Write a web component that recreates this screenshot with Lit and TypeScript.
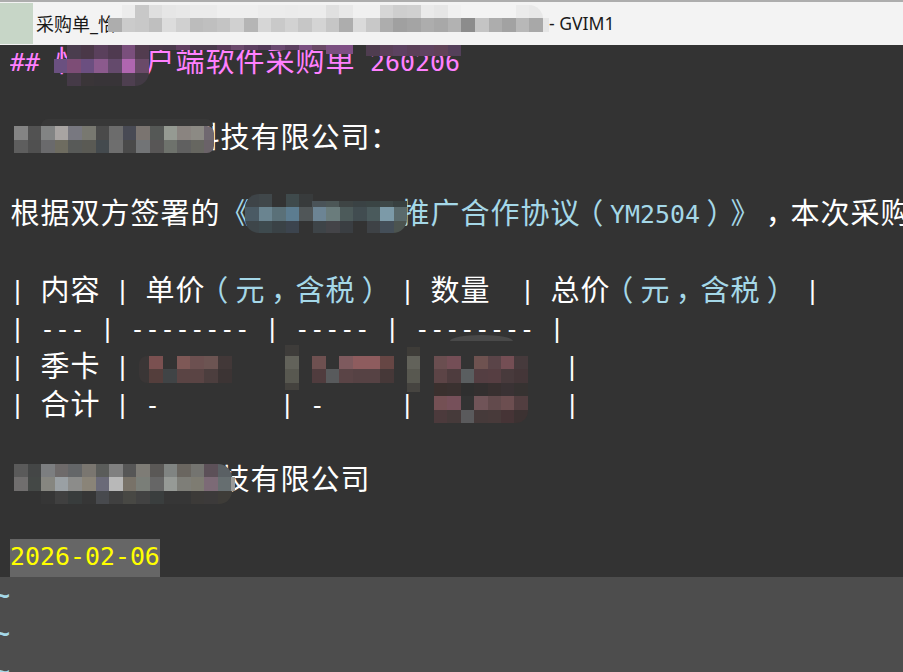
import { LitElement, html, css } from "lit";
import { customElement } from "lit/decorators.js";
import { styleMap } from "lit/directives/style-map.js";

type Seg = [string, string?];
interface Mosaic { x: number; y: number; cw: number; rh: number[]; rows: (string | null)[][]; r?: string; }

const _ = null;

const MOSAICS: Mosaic[] = [
  // title bar band
  { x: 108, y: 5, cw: 13.6, rh: [13, 14], r: "14px 14px 0 0", rows: [
    [_, "#ececec", "#c8c8c8", "#dfdfdf", "#e6e6e6", "#e8e8e8", "#ebebeb", "#ebebeb", "#efefef", "#efefef", "#efefef", "#ececec", "#ececec", "#ebebeb", "#ececec", "#ececec", "#e0e0e0", "#e8e8e8", "#f0f0f0", "#f0f0f0", "#d6d6d6", "#cecece", "#d0d0d0", "#eaeaea", "#e6e6e6", "#f0f0f0", _, _, _, _, "#ebebeb", "#e8e8e8"],
    ["#adadad", "#cbcbcb", "#c8c8c8", "#bfbfbf", "#dcdcdc", "#d0d0d0", "#bcbcbc", "#bfbfbf", "#c4c4c4", "#d0d0d0", "#b5b5b5", "#d6d6d6", "#c9c9c9", "#d2d2d2", "#c6c6c6", "#d4d4d4", "#c6c6c6", "#adadad", "#dadada", "#c8c8c8", "#adadad", "#a0a0a0", "#a4a4a4", "#adadad", "#a8a8a8", "#b2b2b2", "#8c8c8c", "#c4c4c4", "#adadad", "#a2a2a2", "#b8b8b8", "#a8a8a8"],
  ] },
  { x: 543, y: 18, cw: 6, rh: [14], rows: [["#e6e6e6"]] },
  // heading: strips just under the title bar
  { x: 149, y: 45, cw: 13.6, rh: [5], rows: [
    ["#4c3a4c", "#4a3a4c", "#603f60", "#4a3a4c", "#4a3a4c", "#5a3c5a", "#6b4a6c", "#5c4060", "#533a58", "#6a4a70", "#5c4060", "#7a5080", "#6a4a66"],
  ] },
  { x: 326, y: 45, cw: 13.6, rh: [9], rows: [["#7a5080", "#7f4f85"]] },
  { x: 366, y: 45, cw: 13.6, rh: [11], rows: [["#4f3d50", "#5a4058", "#5c4260", "#5a4058", "#5f4460", "#604458", "#54405a"]] },
  // heading: main blob
  { x: 53.6, y: 45, cw: 13.6, rh: [14, 14, 13], r: "0 0 14px 14px", rows: [
    [_, "#4a3d4e", "#4a3848", "#5a405c", "#4f3a50", "#7a4f7c", "#523c4f"],
    ["#6a5080", "#7d4d76", "#6b4f80", "#8b5a8d", "#644a6c", "#b066b0", "#6a4a68"],
    [_, "#453a47", "#3a3538", "#383438", "#383438", "#4e3f50", "#423a44"],
  ] },
  // line 3
  { x: 41, y: 119, cw: 172, rh: [7], r: "8px 8px 0 0", rows: [["#383838"]] },
  { x: 14, y: 126, cw: 13.6, rh: [14, 13], rows: [
    ["#848484", "#525252", "#828484", "#a8a4a2", "#787880", "#787870", "#4a4a4a", "#6c6c6c", "#484a54", "#7a7470", "#555856", "#959a92", "#8a8480", "#8c8a84"],
    ["#5e5e5e", "#505050", "#6a6a6c", "#6e6c60", "#585a58", "#5a5a54", "#444a4e", "#6e6e6e", "#4a4a4a", "#727476", "#585656", "#6e726c", "#606060", "#666660"],
  ] },
  { x: 204, y: 126, cw: 10, rh: [14, 13], r: "0 7px 7px 0", rows: [["#706870"], ["#6a6268"]] },
  // line 5
  { x: 245, y: 194, cw: 13.5, rh: [13, 14, 12], r: "14px 14px 14px 14px", rows: [
    ["#3e4448", "#40474a", _, "#3f4a4c", "#383b3c", _, _, _, _, _, _, _],
    ["#4a5a64", "#6a8490", "#5a7078", "#5c7c90", "#505658", "#6c8494", "#6a7c7c", "#4c5a5a", "#414c50", "#4a5a5c", "#7c9aa8", "#5a6a6c"],
    ["#3e464a", "#3e4a4e", "#3a4246", "#3c444e", _, "#3e4448", "#444448", "#3a3e42", _, "#3e4246", "#444e58", "#4c5450"],
  ] },
  { x: 312, y: 201, cw: 13.5, rh: [6], rows: [
    ["#4a5358", "#4c5656", "#3e4444", "#3a4244", "#3a4444", "#3e4848", "#384040"],
  ] },
  // line 9, amount cells
  { x: 139, y: 356, cw: 10, rh: [27], r: "8px 0 0 8px", rows: [["#3a3636"]] },
  { x: 149, y: 356, cw: 13.8, rh: [13, 14], rows: [
    ["#7a5050", _, "#7e5856", "#6c5050", "#6c5452", "#423838"],
    ["#543e3c", "#404446", "#5a4444", "#5a4444", "#4c3e3e", "#3c3434"],
  ] },
  { x: 285, y: 345, cw: 14, rh: [11, 13, 14, 7], rows: [["#3e3c3a"], ["#62625a"], ["#585850"], ["#44423e"]] },
  { x: 312, y: 356, cw: 13.6, rh: [13, 14], rows: [
    ["#6e5050", _, "#7e5a5e", "#8e5c5e", "#8e5c5e", "#664644"],
    ["#503c3e", "#585a5c", "#5a4446", "#564244", "#564244", "#463838"],
  ] },
  { x: 407, y: 347, cw: 13, rh: [9, 13, 14, 9], rows: [["#3e3c38"], ["#62625a"], ["#585850"], ["#464440"]] },
  { x: 434, y: 356, cw: 13.4, rh: [13, 14, 13, 14, 13], r: "0 0 12px 0", rows: [
    ["#6a4e50", "#744e56", _, "#6e5250", "#5a4448", "#744e54", "#463a3c"],
    ["#5c4446", "#4e3c3e", "#5a5e60", "#543e42", "#563e42", "#483a3c", "#443638"],
    ["#3a302e", "#3a3130", "#2f2f2f", "#332f2f", "#383030", "#3a3234", "#363231"],
    ["#745054", "#76505a", _, "#705458", "#624a4c", "#6c4e50", "#523e40"],
    ["#4c3a3c", "#463a3a", "#5a5a5c", "#463a3a", "#483a3a", "#463436", "#3c3232"],
  ] },
  // line 12
  { x: 14, y: 464, cw: 13.6, rh: [13, 14], r: "0 14px 0 0", rows: [
    ["#5a5a5a", "#444646", "#7c7e80", "#6e6a6a", "#646668", "#7a7670", "#5a5c5a", "#808080", "#565656", "#7e7c76", "#5a5856", "#808482", "#6a6660", "#747470", "#5c5058", "#5a6064"],
    ["#706e6e", "#444846", "#868680", "#9aa0a4", "#8c8c8a", "#8a8478", "#6a6a78", "#b8b8b8", "#787268", "#7a7e78", "#666666", "#969a96", "#7e7e78", "#7e7c72", "#7c6a76", "#666e70"],
  ] },
  { x: 231, y: 477, cw: 4, rh: [14], rows: [["#9a9a98"]] },
  { x: 27.6, y: 491, cw: 13.6, rh: [13], r: "0 0 14px 0", rows: [
    [_, "#363636", "#404040", "#383c3c", "#363636", "#484a4e", "#404040", "#484844", "#424242", "#3a3e3e", "#363636", "#363636", "#3c3a38", "#3c3a3a", "#3e3c38"],
  ] },
];

const SP = "\u3000";

const LINES: Seg[][] = [
  [[`## 怡${SP}${SP}户端软件采购单 260206`, "h"]],
  [],
  [[`${SP}${SP}${SP}${SP}${SP}${SP}科技有限公司：`]],
  [],
  [["根据双方签署的"], [`《${SP}${SP}${SP}${SP}${SP}推广合作协议（YM2504）》`, "b"], ["，本次采购"]],
  [],
  [["| 内容 | 单价"], ["（元，含税）", "b"], [" | 数量  | 总价"], ["（元，含税）", "b"], [" |"]],
  [["| --- | -------- | ----- | -------- |"]],
  [["| 季卡 |                             |"]],
  [["| 合计 | -        | -     |          |"]],
  [],
  [[`${SP}${SP}${SP}${SP}${SP}${SP}${SP}技有限公司`]],
  [],
  [["2026-02-06", "d"]],
];

const WIDE = /[\u3000-\u30ff\u4e00-\u9fff\uff00-\uffef《》]/;
const CENTRED = new Set(["（", "）", "，"]);

function cells(text: string) {
  const out: unknown[] = [];
  let run = "";
  const flush = () => {
    if (run) out.push(html`<span class="n">${run}</span>`);
    run = "";
  };
  for (const ch of text) {
    if (WIDE.test(ch)) {
      flush();
      const cls = ch === "：" ? "c p l" : CENTRED.has(ch) ? "c p" : "c";
      out.push(html`<span class=${cls}>${ch}</span>`);
    } else if (ch === "|") {
      flush();
      out.push(html`<span class="bar">|</span>`);
    } else {
      run += ch;
    }
  }
  flush();
  return out;
}

@customElement("app-root")
export class AppRoot extends LitElement {
  static styles = css`
    :host {
      display: flex;
      flex-direction: column;
      position: relative;
      width: 903px;
      height: 672px;
      overflow: hidden;
      background: #333333;
      font-family: "DejaVu Sans Mono", "Noto Sans CJK SC", monospace;
    }
    .titlebar {
      flex: none;
      height: 45px;
      box-sizing: border-box;
      display: flex;
      align-items: center;
      padding-bottom: 2px;
      background: #f3f3f3;
      border-top: 2px solid #adadad;
      color: #1a1a1a;
      font-family: "Noto Sans", "Noto Sans CJK SC", sans-serif;
      font-size: 17.6px;
    }
    .appicon {
      flex: none;
      width: 33px;
      height: 41px;
      margin-top: 1px;
      align-self: flex-start;
      background: #c7d6c7;
      margin-right: 3px;
    }
    .doc {
      flex: none;
      width: 513px;
      white-space: nowrap;
      overflow: hidden;
      font-size: 18px;
    }
    .buffer {
      flex: none;
      padding-left: 10px;
    }
    .line {
      height: 38px;
      line-height: 36px;
      white-space: pre;
      overflow: hidden;
      color: #ffffff;
      font-size: 24.9px;
    }
    .n { white-space: pre; }
    .bar { vertical-align: 1px; }
    .c {
      display: inline-block;
      width: 30px;
      height: 0;
      line-height: 0;
      text-align: center;
      font-family: "Noto Sans CJK SC", sans-serif;
      font-size: 29px;
      vertical-align: -1px;
    }
    .p { font-feature-settings: "palt"; }
    .l { text-align: left; }
    .h { color: #ff80ff; }
    .b { color: #a5d8e8; }
    .d { color: #ffff00; background: #666666; display: inline-block; height: 38px; }
    .tail {
      flex: 1;
      background: #4d4d4d;
      color: #a5d8e8;
      font-size: 24.9px;
      font-weight: 700;
    }
    .tilde {
      height: 38px;
      line-height: 38px;
      margin-left: -5px;
    }
    .mosaics {
      position: absolute;
      inset: 0;
      pointer-events: none;
    }
    .mosaic {
      position: absolute;
      display: grid;
      overflow: hidden;
    }
    .arc {
      position: absolute;
      left: 450px;
      top: 335px;
      width: 63px;
      height: 6px;
      background: #494949;
      border-radius: 50% 50% 0 0 / 100% 100% 0 0;
    }
  `;

  private mosaic(m: Mosaic) {
    const n = m.rows[0].length;
    const style = {
      left: `${m.x}px`,
      top: `${m.y}px`,
      gridTemplateColumns: `repeat(${n}, ${m.cw}px)`,
      gridTemplateRows: m.rh.map((h) => `${h}px`).join(" "),
      borderRadius: m.r ?? "0",
    };
    return html`<div class="mosaic" style=${styleMap(style)}>
      ${m.rows.flat().map((c) => html`<i style=${styleMap({ background: c ?? "transparent" })}></i>`)}
    </div>`;
  }

  render() {
    return html`
      <div class="titlebar">
        <div class="appicon"></div>
        <div class="doc">采购单_怡</div>
        <div>- GVIM1</div>
      </div>
      <div class="buffer">
        ${LINES.map(
          (segs) => html`<div class="line">${segs.map(
            ([t, cls]) => html`<span class=${cls ?? ""}>${cells(t)}</span>`
          )}</div>`
        )}
      </div>
      <div class="tail">
        <div class="tilde">~</div>
        <div class="tilde">~</div>
        <div class="tilde">~</div>
      </div>
      <div class="mosaics">
        <div class="arc"></div>
        ${MOSAICS.map((m) => this.mosaic(m))}
      </div>
    `;
  }
}
